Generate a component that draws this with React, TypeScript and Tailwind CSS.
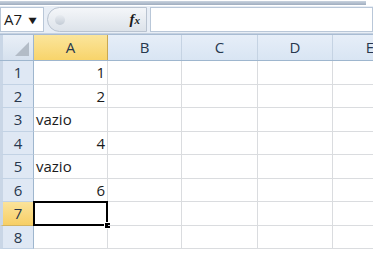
import React from 'react'

const cols = [
  { name: 'A', w: 'w-[74px]' },
  { name: 'B', w: 'w-[74px]' },
  { name: 'C', w: 'w-[76px]' },
  { name: 'D', w: 'w-[75px]' },
  { name: 'E', w: 'w-[75px]' },
]

const data: Record<number, { v: string; right?: boolean }> = {
  1: { v: '1', right: true },
  2: { v: '2', right: true },
  3: { v: 'vazio' },
  4: { v: '4', right: true },
  5: { v: 'vazio' },
  6: { v: '6', right: true },
}

const rows = [1, 2, 3, 4, 5, 6, 7, 8]

const App = () => {
  return (
    <div className="w-[373px] h-[257px] overflow-hidden bg-white font-['Open_Sans','Liberation_Sans',sans-serif] text-[#1b1b1b]">
      {/* top strip */}
      <div className="h-[6px] pt-[1px] bg-white">
        <div className="h-[4px] w-[366px] bg-gradient-to-b from-[#c9d3df] to-[#9fadbf]" />
      </div>

      {/* formula bar */}
      <div className="h-[28px] flex items-center bg-[#e8eef6] border-b border-[#c5d1e0]">
        <div className="w-[44px] h-[25px] shrink-0 bg-white border border-[#b9c7d8] flex items-center pl-[3px] text-[15px] leading-none">
          <span>A7</span>
          <span className="ml-[5px] text-[11px] scale-x-125">▼</span>
        </div>
        <div className="ml-[3px] w-[100px] h-[25px] shrink-0 rounded-l-full border border-[#b9c3d0] bg-gradient-to-b from-[#f4f6f9] to-[#dde3ea] flex items-center">
          <div className="ml-[7px] w-[10px] h-[10px] rounded-full bg-gradient-to-b from-[#e8ecf1] to-[#c4ccd6]" />
          <span className="ml-auto mr-[6px] font-['Liberation_Serif',serif] italic font-bold text-[15px] leading-none">
            f<span className="text-[11px]">x</span>
          </span>
        </div>
        <div className="ml-[3px] flex-1 h-[25px] bg-white border border-[#b9c7d8]" />
      </div>

      {/* grid */}
      <div className="border-t border-[#a9bcd3]">
        {/* header row */}
        <div className="flex h-[26px] border-b border-[#9eb6ce]">
          <div className="w-[34px] shrink-0 relative border-r border-[#9eb6ce] bg-gradient-to-b from-[#e9eff7] to-[#d6e1ee] border-l-[3px] border-l-[#c9d6e6]">
            <div className="absolute right-[4px] bottom-[4px] w-0 h-0 border-l-[14px] border-l-transparent border-b-[14px] border-b-[#b3bcc7]" />
          </div>
          {cols.map((c) => (
            <div
              key={c.name}
              className={`${c.w} shrink-0 flex items-center justify-center text-[15px] text-[#27374d] border-r border-[#c5d3e3] ${
                c.name === 'A'
                  ? 'bg-gradient-to-b from-[#fbe59b] to-[#f8d46a] border-r-[#c9a852]'
                  : 'bg-gradient-to-b from-[#e6eef8] to-[#d9e5f3]'
              }`}
            >
              {c.name}
            </div>
          ))}
        </div>

        {rows.map((r) => {
          const d = data[r]
          const sel = r === 7
          return (
            <div key={r} className={`flex h-[23.5px] relative ${sel ? 'z-10' : ''}`}>
              <div
                className={`w-[34px] shrink-0 flex items-center justify-center text-[15px] text-[#27374d] border-l-[3px] border-l-[#c9d6e6] border-r border-b ${
                  sel
                    ? 'bg-gradient-to-b from-[#fbe39a] to-[#f7cf65] border-r-[#c9a852] border-b-[#d3b462]'
                    : 'bg-[#dfe8f4] border-r-[#9eb6ce] border-b-[#c2d2e4]'
                }`}
              >
                {r}
              </div>
              {cols.map((c) => (
                <div key={c.name} className={`${c.w} shrink-0 relative border-r border-b border-[#dadcdf]`}>
                  {c.name === 'A' && d && (
                    <div
                      className={`h-full flex items-center text-[15px] px-[2px] ${
                        d.right ? 'justify-end' : 'justify-start'
                      }`}
                    >
                      {d.v}
                    </div>
                  )}
                  {c.name === 'A' && sel && (
                    <div className="absolute -left-[1px] -top-[1px] -right-[1px] -bottom-[1px] border-[2px] border-black">
                      <div className="absolute -right-[5px] -bottom-[5px] w-[7px] h-[7px] bg-black border border-white" />
                    </div>
                  )}
                </div>
              ))}
            </div>
          )
        })}
      </div>
    </div>
  )
}

export default App
